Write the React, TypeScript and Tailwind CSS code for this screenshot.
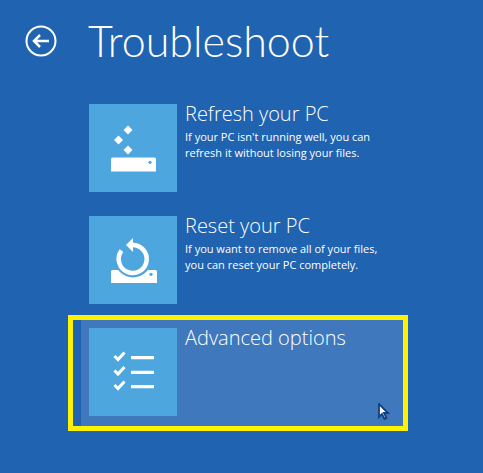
import type { ReactNode } from 'react';

const tileBlue = '#4ea6df';

function RefreshIcon() {
  return (
    <svg width="88" height="88" viewBox="0 0 88 88" fill="white">
      <path d="M39 21.500l4.500 4.500-4.500 4.500-4.500-4.500z" />
      <path d="M29.500 31.500l4.500 4.500-4.500 4.500-4.500-4.500z" />
      <path d="M39 41.500l4.500 4.500-4.500 4.500-4.500-4.500z" />
      <path d="M23.500 53.500h42a1.500 1.500 0 0 1 1.500 1.500v12.500h-45v-12.500a1.500 1.500 0 0 1 1.500-1.500z" />
      <circle cx="61" cy="58.300" r="1.600" fill={tileBlue} />
    </svg>
  );
}

function ResetIcon() {
  return (
    <svg width="88" height="88" viewBox="0 0 88 88" fill="white">
      <path d="M23.500 54h43a1.500 1.500 0 0 1 1.500 1.500v11.500h-46v-11.500a1.500 1.500 0 0 1 1.500-1.500z" />
      <circle cx="44" cy="43" r="14" fill="none" stroke={tileBlue} strokeWidth="9" />
      <path d="M42 29.100a14 14 0 1 1-9.500 5.500" fill="none" stroke="white" strokeWidth="4.500" />
      <path d="M44 22v14l-7-7z" />
      <circle cx="62" cy="58.300" r="1.600" fill={tileBlue} />
    </svg>
  );
}

function OptionsIcon() {
  return (
    <svg width="88" height="88" viewBox="0 0 88 88" fill="none" stroke="white">
      <path d="M25.500 28l3.500 3.500 6.500-7M25.500 42.500l3.500 3.500 6.500-7M25.500 57l3.500 3.500 6.500-7" strokeWidth="3" />
      <path d="M42 29.700h23M42 44.300h23M42 58.700h23" strokeWidth="3.200" />
    </svg>
  );
}

function Row({ icon, title, lines }: { icon: ReactNode; title: string; lines?: string[] }) {
  return (
    <div className="flex h-[88px] items-start gap-2">
      <div className="h-[88px] w-[88px] shrink-0 bg-[#4ea6df]">{icon}</div>
      <div className="text-white">
        <div className="-mt-[5px] text-[20px] font-light leading-[30px]">{title}</div>
        {lines?.map((l) => (
          <div key={l} className="text-[11px] leading-[16px]">{l}</div>
        ))}
      </div>
    </div>
  );
}

export default function App() {
  return (
    <div className="h-[473px] w-[483px] overflow-hidden bg-[#1f63b1] font-['Open_Sans',sans-serif] text-white">
      <div className="flex items-center gap-[31px] pl-[25px] pt-[12px]">
        <svg width="32" height="32" viewBox="0 0 32 32" fill="none" stroke="white" strokeWidth="2">
          <circle cx="16" cy="16" r="14.500" />
          <path d="M24 16H9M15 10l-6 6 6 6" strokeWidth="2.500" />
        </svg>
        <div className="font-['Lato',sans-serif] text-[43px] font-light leading-[58px]">Troubleshoot</div>
      </div>
      <div className="ml-[89px] mt-[34px] flex w-[320px] flex-col gap-6">
        <Row
          icon={<RefreshIcon />}
          title="Refresh your PC"
          lines={["If your PC isn't running well, you can", 'refresh it without losing your files.']}
        />
        <Row
          icon={<ResetIcon />}
          title="Reset your PC"
          lines={['If you want to remove all of your files,', 'you can reset your PC completely.']}
        />
      </div>
      <div className="relative ml-[68px] mt-[11px] h-[116px] w-[340px] border-[5px] border-[#fff200]">
        <div className="ml-[8px] h-full bg-[#3f78bd] pl-[8px] pt-[8px]">
          <Row icon={<OptionsIcon />} title="Advanced options" />
        </div>
        <svg className="absolute left-[305px] top-[83px]" width="12" height="18" viewBox="0 0 12 18">
          <path d="M1 1v13l3-3 2.500 5 2-1-2.500-5h4z" fill="white" stroke="#123f80" strokeWidth="1.800" />
        </svg>
      </div>
    </div>
  );
}
